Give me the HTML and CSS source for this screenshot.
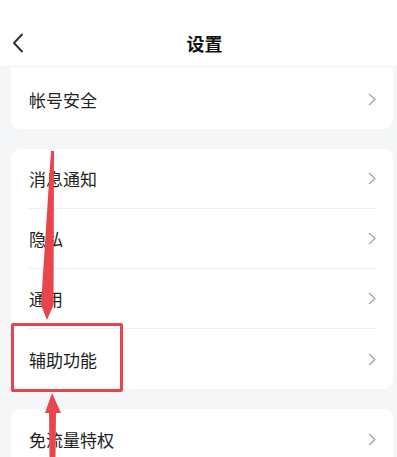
FILE: index.html
```html
<!DOCTYPE html>
<html lang="zh-CN">
<head>
<meta charset="utf-8">
<title>设置</title>
<link rel="stylesheet" href="styles.css">
</head>
<body>
<div class="page">
  <header class="header">
    <div class="bar">
      <svg class="back" width="12" height="20" viewBox="0 0 12 20"><polyline points="10,1.5 2,10 10,18.5" fill="none" stroke="#333" stroke-width="2" stroke-linecap="round" stroke-linejoin="round"/></svg>
      <div class="title">设置</div>
    </div>
  </header>
  <main class="content">
    <section class="card card-first">
      <div class="row"><span class="label">帐号安全</span><svg class="chev" width="8" height="13" viewBox="0 0 8 13"><polyline points="1,1 7,6.5 1,12" fill="none" stroke="#a6a6a6" stroke-width="1.4"/></svg></div>
    </section>
    <section class="card">
      <div class="row"><span class="label">消息通知</span><svg class="chev" width="8" height="13" viewBox="0 0 8 13"><polyline points="1,1 7,6.5 1,12" fill="none" stroke="#a6a6a6" stroke-width="1.4"/></svg></div>
      <div class="row"><span class="label">隐私</span><svg class="chev" width="8" height="13" viewBox="0 0 8 13"><polyline points="1,1 7,6.5 1,12" fill="none" stroke="#a6a6a6" stroke-width="1.4"/></svg></div>
      <div class="row"><span class="label">通用</span><svg class="chev" width="8" height="13" viewBox="0 0 8 13"><polyline points="1,1 7,6.5 1,12" fill="none" stroke="#a6a6a6" stroke-width="1.4"/></svg></div>
      <div class="row"><span class="label">辅助功能</span><svg class="chev" width="8" height="13" viewBox="0 0 8 13"><polyline points="1,1 7,6.5 1,12" fill="none" stroke="#a6a6a6" stroke-width="1.4"/></svg></div>
    </section>
    <section class="card">
      <div class="row"><span class="label">免流量特权</span><svg class="chev" width="8" height="13" viewBox="0 0 8 13"><polyline points="1,1 7,6.5 1,12" fill="none" stroke="#a6a6a6" stroke-width="1.4"/></svg></div>
    </section>
  </main>
  <div class="highlight"></div>
  <svg class="arrows" width="397" height="457" viewBox="0 0 397 457">
    <polygon points="51,151 54,151 53.5,305 47,320 41,305" fill="#e8464c"/>
    <polygon points="52,393 61,413 56,413 55.5,457 49.5,457 49,413 45,413" fill="#e8464c"/>
  </svg>
</div>
</body>
</html>
```
FILE: styles.css
```css
html, body {
  margin: 0;
  padding: 0;
}
body {
  background: #f5f6f8;
  font-family: "Noto Sans CJK SC", "Noto Sans", sans-serif;
  color: #222;
}
.page {
  position: relative;
  width: 397px;
  height: 457px;
  overflow: hidden;
  background: #f5f6f8;
}
.header {
  height: 67px;
  box-sizing: border-box;
  background: #fff;
  border-bottom: 1px solid #eeeff1;
  padding-top: 20px;
}
.bar {
  position: relative;
  height: 46px;
  display: flex;
  align-items: center;
  justify-content: center;
  padding-left: 12px;
}
.back {
  position: absolute;
  left: 12px;
  top: 13px;
}
.title {
  font-size: 18px;
  font-weight: 600;
  color: #111;
  line-height: 1;
}
.content {
  display: flex;
  flex-direction: column;
  gap: 20px;
  padding: 0 4px 0 11px;
}
.card {
  background: #fff;
  border-radius: 9px;
}
.card-first {
  padding-top: 2px;
  border-radius: 0 0 9px 9px;
}
.row {
  height: 60px;
  box-sizing: border-box;
  margin: 0 17px 0 18px;
  display: flex;
  align-items: center;
  justify-content: space-between;
  border-bottom: 1px solid #f0f0f2;
}
.row:last-child {
  border-bottom: none;
}
.label {
  font-size: 17px;
  line-height: 1;
  color: #222;
}
.chev {
  display: block;
}
.highlight {
  position: absolute;
  left: 11px;
  top: 323px;
  width: 112px;
  height: 69px;
  box-sizing: border-box;
  border: 3px solid #e5454b;
  border-radius: 2px;
}
.arrows {
  position: absolute;
  left: 0;
  top: 0;
  pointer-events: none;
}
```
